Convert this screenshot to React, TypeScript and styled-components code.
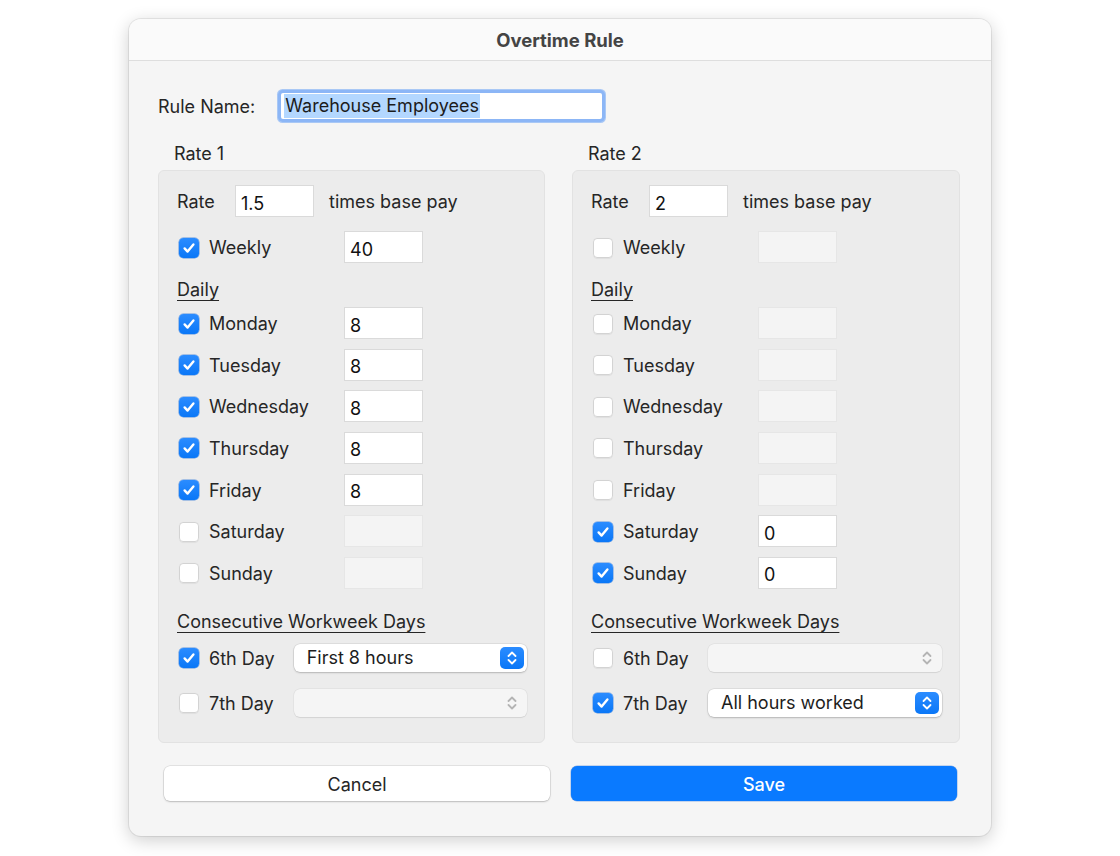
import React from "react";
import styled, { createGlobalStyle } from "styled-components";

const GlobalStyle = createGlobalStyle`
  html, body {
    margin: 0;
    padding: 0;
    background: #ffffff;
  }
  body {
    font-family: Inter, "Noto Sans", "Liberation Sans", sans-serif;
    color: #262626;
    -webkit-font-smoothing: antialiased;
  }
`;

const Page = styled.div`
  width: 1120px;
  height: 856px;
  padding: 19px 0 0 129px;
  box-sizing: border-box;
`;

const Window = styled.div`
  width: 862px;
  border-radius: 12px;
  background: #f5f5f5;
  overflow: hidden;
  box-shadow: 0 0 0 1px rgba(0, 0, 0, 0.07), 0 4px 18px rgba(0, 0, 0, 0.2);
`;

const TitleBar = styled.div`
  height: 42px;
  display: flex;
  align-items: center;
  justify-content: center;
  background: #fafafa;
  border-bottom: 1px solid #dedede;
  box-sizing: border-box;
  font-size: 18.5px;
  font-weight: 700;
  color: #444444;
`;

const Body = styled.div`
  padding: 29px 31px 35px 29px;
`;

const NameRow = styled.div`
  display: flex;
  align-items: center;
  gap: 23px;
  height: 32px;
  font-size: 18px;
`;

const NameField = styled.div`
  width: 318px;
  height: 26px;
  background: #fff;
  border-radius: 2px;
  box-shadow: 0 0 0 3px #8cb6f6, 0 0 0 4px #a9c8f5;
  margin-left: 3px;
  display: flex;
  align-items: center;
  padding-left: 3px;
  font-size: 18px;
  color: #1c1c1c;
`;

const Selected = styled.span`
  background: #b3d7ff;
  line-height: 24px;
  padding: 0 1px;
`;

const Columns = styled.div`
  display: grid;
  grid-template-columns: 387px 388px;
  column-gap: 27px;
  margin-top: 22px;
`;

const GroupTitle = styled.div`
  height: 20px;
  line-height: 20px;
  font-size: 18px;
  padding-left: 16px;
  margin-bottom: 6px;
`;

const GroupBox = styled.div`
  background: #ececec;
  border: 1px solid #e2e2e2;
  border-radius: 6px;
  padding: 15px 17px 25px 18px;
  display: flex;
  flex-direction: column;
`;

const Row = styled.div<{ $top?: number; $h?: number }>`
  display: flex;
  align-items: center;
  height: ${(p) => p.$h ?? 30}px;
  margin-top: ${(p) => p.$top ?? 0}px;
  font-size: 18px;
`;

const RateLabel = styled.span`
  width: 59px;
`;

const After = styled.span`
  margin-left: 16px;
`;

const CheckCell = styled.label<{ $w: number }>`
  width: ${(p) => p.$w}px;
  display: flex;
  align-items: center;
  gap: 10px;
  padding-left: 2px;
  padding-top: 1px;
  box-sizing: border-box;
`;

const Box = styled.span<{ $on: boolean }>`
  width: 20px;
  height: 20px;
  border-radius: 4.5px;
  box-sizing: border-box;
  display: flex;
  align-items: center;
  justify-content: center;
  background: ${(p) => (p.$on ? "linear-gradient(#2b8cff, #0a77f7)" : "#ffffff")};
  box-shadow: ${(p) =>
    p.$on
      ? "0 0 0 0.5px rgba(0, 90, 210, 0.6)"
      : "inset 0 0 0 1px #d3d3d3, 0 0.5px 1px rgba(0,0,0,0.06)"};
`;

const Field = styled.div<{ $disabled?: boolean; $w?: number }>`
  width: ${(p) => p.$w ?? 77}px;
  height: 30px;
  box-sizing: border-box;
  padding: 4px 0 0 5px;
  display: flex;
  align-items: center;
  font-size: 18px;
  color: #111;
  background: ${(p) => (p.$disabled ? "#f4f4f4" : "#ffffff")};
  box-shadow: ${(p) =>
    p.$disabled
      ? "0 0 0 1px #e6e6e6"
      : "0 0 0 1px #dadada, 0 1px 0 #c8c8c8"};
`;

const SectionHead = styled.div<{ $top: number }>`
  height: 22px;
  line-height: 22px;
  margin-top: ${(p) => p.$top}px;
  font-size: 18px;
  text-decoration: underline;
  text-underline-offset: 4px;
  text-decoration-thickness: 1px;
`;

const DayList = styled.div`
  display: flex;
  flex-direction: column;
  gap: 11.67px;
  margin-top: 7px;
`;

const Select = styled.div<{ $disabled?: boolean }>`
  width: 234px;
  height: 28px;
  border-radius: 6px;
  box-sizing: border-box;
  display: flex;
  align-items: center;
  justify-content: space-between;
  padding: 0 3px 0 13px;
  font-size: 18px;
  color: #1d1d1d;
  background: ${(p) => (p.$disabled ? "#f5f5f5" : "#ffffff")};
  box-shadow: ${(p) =>
    p.$disabled
      ? "0 0 0 0.5px rgba(0,0,0,0.06), 0 0.5px 1px rgba(0,0,0,0.08)"
      : "0 0 0 0.5px rgba(0,0,0,0.12), 0 1px 2px rgba(0,0,0,0.18)"};
`;

const Stepper = styled.span<{ $disabled?: boolean }>`
  width: 24px;
  height: 22px;
  border-radius: 5px;
  display: flex;
  align-items: center;
  justify-content: center;
  background: ${(p) => (p.$disabled ? "transparent" : "linear-gradient(#2b8cff, #0a77f7)")};
`;

const Buttons = styled.div`
  display: grid;
  grid-template-columns: 386px 386px;
  column-gap: 21px;
  padding-left: 6px;
  margin-top: 23px;
`;

const Button = styled.button<{ $primary?: boolean }>`
  all: unset;
  height: 35px;
  border-radius: 6px;
  display: flex;
  align-items: center;
  justify-content: center;
  padding-top: 2px;
  box-sizing: border-box;
  font-family: Inter, "Noto Sans", sans-serif;
  font-size: 18px;
  font-weight: ${(p) => (p.$primary ? 500 : 400)};
  color: ${(p) => (p.$primary ? "#ffffff" : "#262626")};
  background: ${(p) => (p.$primary ? "#0a7aff" : "#ffffff")};
  box-shadow: ${(p) =>
    p.$primary
      ? "0 0 0 0.5px rgba(0,80,200,0.4)"
      : "0 0 0 0.5px rgba(0,0,0,0.14), 0 1px 2px rgba(0,0,0,0.18)"};
`;

const Check = ({ on }: { on: boolean }) => (
  <Box $on={on}>
    {on && (
      <svg width="14" height="14" viewBox="0 0 14 14">
        <path
          d="M2.6 7.4 L5.6 10.6 L11.4 3.4"
          fill="none"
          stroke="#fff"
          strokeWidth="2.4"
          strokeLinecap="round"
          strokeLinejoin="round"
        />
      </svg>
    )}
  </Box>
);

const Chevrons = ({ color }: { color: string }) => (
  <svg width="12" height="16" viewBox="0 0 12 16">
    <path
      d="M2.5 6 L6 2.5 L9.5 6 M2.5 10 L6 13.5 L9.5 10"
      fill="none"
      stroke={color}
      strokeWidth="1.8"
      strokeLinecap="round"
      strokeLinejoin="round"
    />
  </svg>
);

type Day = { name: string; on: boolean; value?: string };

type Rate = {
  title: string;
  rate: string;
  weekly: { on: boolean; value?: string };
  days: Day[];
  sixth: { on: boolean; value?: string };
  seventh: { on: boolean; value?: string };
};

const rates: Rate[] = [
  {
    title: "Rate 1",
    rate: "1.5",
    weekly: { on: true, value: "40" },
    days: [
      { name: "Monday", on: true, value: "8" },
      { name: "Tuesday", on: true, value: "8" },
      { name: "Wednesday", on: true, value: "8" },
      { name: "Thursday", on: true, value: "8" },
      { name: "Friday", on: true, value: "8" },
      { name: "Saturday", on: false },
      { name: "Sunday", on: false },
    ],
    sixth: { on: true, value: "First 8 hours" },
    seventh: { on: false },
  },
  {
    title: "Rate 2",
    rate: "2",
    weekly: { on: false },
    days: [
      { name: "Monday", on: false },
      { name: "Tuesday", on: false },
      { name: "Wednesday", on: false },
      { name: "Thursday", on: false },
      { name: "Friday", on: false },
      { name: "Saturday", on: true, value: "0" },
      { name: "Sunday", on: true, value: "0" },
    ],
    sixth: { on: false },
    seventh: { on: true, value: "All hours worked" },
  },
];

const PopUp = ({ value }: { value?: string }) => (
  <Select $disabled={!value}>
    <span>{value ?? ""}</span>
    <Stepper $disabled={!value}>
      <Chevrons color={value ? "#ffffff" : "#b4b4b4"} />
    </Stepper>
  </Select>
);

const RateGroup = ({ r }: { r: Rate }) => (
  <div>
    <GroupTitle>{r.title}</GroupTitle>
    <GroupBox>
      <Row>
        <RateLabel>Rate</RateLabel>
        <Field>{r.rate}</Field>
        <After>times base pay</After>
      </Row>
      <Row $top={16}>
        <CheckCell $w={168}>
          <Check on={r.weekly.on} />
          Weekly
        </CheckCell>
        <Field $disabled={!r.weekly.on}>{r.weekly.value}</Field>
      </Row>
      <SectionHead $top={17}>Daily</SectionHead>
      <DayList>
        {r.days.map((d) => (
          <Row key={d.name}>
            <CheckCell $w={168}>
              <Check on={d.on} />
              {d.name}
            </CheckCell>
            <Field $disabled={!d.on}>{d.value}</Field>
          </Row>
        ))}
      </DayList>
      <SectionHead $top={23}>Consecutive Workweek Days</SectionHead>
      <Row $top={11} $h={28}>
        <CheckCell $w={117}>
          <Check on={r.sixth.on} />
          6th Day
        </CheckCell>
        <PopUp value={r.sixth.value} />
      </Row>
      <Row $top={17} $h={28}>
        <CheckCell $w={117}>
          <Check on={r.seventh.on} />
          7th Day
        </CheckCell>
        <PopUp value={r.seventh.value} />
      </Row>
    </GroupBox>
  </div>
);

export default function App() {
  return (
    <>
      <GlobalStyle />
      <Page>
        <Window>
          <TitleBar>Overtime Rule</TitleBar>
          <Body>
            <NameRow>
              <span>Rule Name:</span>
              <NameField>
                <Selected>Warehouse Employees</Selected>
              </NameField>
            </NameRow>
            <Columns>
              {rates.map((r) => (
                <RateGroup key={r.title} r={r} />
              ))}
            </Columns>
            <Buttons>
              <Button>Cancel</Button>
              <Button $primary>Save</Button>
            </Buttons>
          </Body>
        </Window>
      </Page>
    </>
  );
}
